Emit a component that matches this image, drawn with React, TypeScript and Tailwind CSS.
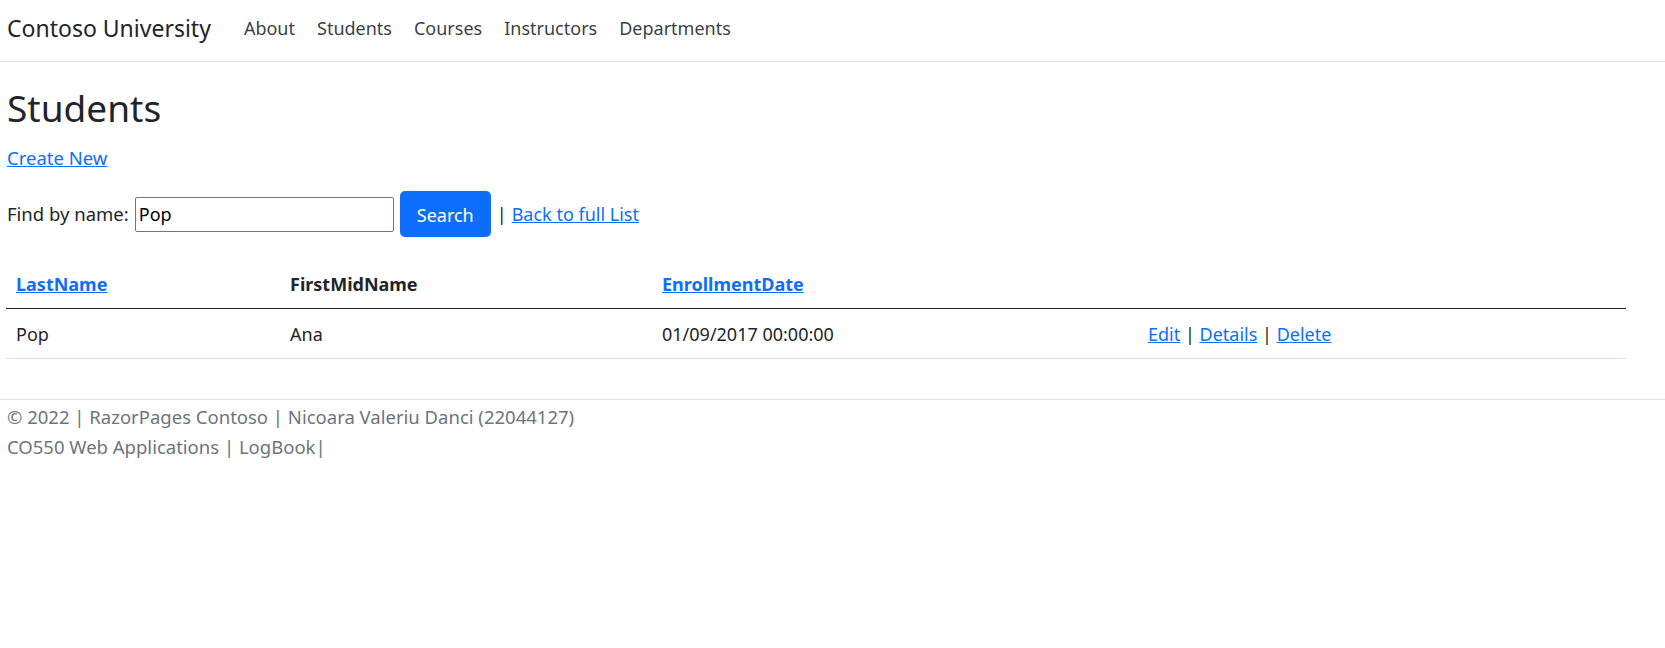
import React from "react";

const font = { fontFamily: '"Noto Sans", "Open Sans", "Liberation Sans", sans-serif' };

const navLinks = ["About", "Students", "Courses", "Instructors", "Departments"];

export default function App() {
  return (
    <div className="min-h-[648px] bg-white text-[18px] text-[#212529]" style={font}>
      {/* Navbar */}
      <header className="h-[62px] border-b border-[#dee2e6] flex items-center pl-[7px] pb-[4px]">
        <span className="text-[23px] leading-none">Contoso University</span>
        <nav className="flex items-center ml-[29px] gap-[14px]">
          {navLinks.map((l) => (
            <span key={l} className="px-[4px] text-[#212529]/90">{l}</span>
          ))}
        </nav>
      </header>

      <main className="px-[6px]">
        <h1 className="mt-[22px] text-[37px] leading-[48px] font-normal pl-px">Students</h1>

        <p className="mt-[14px] leading-[24px] pl-px text-[18.5px]">
          <a className="text-[#0d6efd] underline">Create New</a>
        </p>

        <form className="mt-[21px] flex items-center pl-px">
          <span className="text-[18.5px]">Find by name:</span>
          <input
            defaultValue="Pop"
            className="ml-[6px] w-[259px] h-[35px] border border-[#767676] rounded-[2px] px-[3px] text-[18px] text-black outline-none"
            style={font}
          />
          <button
            type="button"
            className="ml-[6px] w-[91px] h-[46px] bg-[#0d6efd] text-white text-[18px] rounded-[5px] pt-[2px]"
          >
            Search
          </button>
          <span className="ml-[6px]">|</span>
          <a className="ml-[5px] text-[#0d6efd] underline">Back to full List</a>
        </form>

        <table className="mt-[25px] w-[1620px] border-collapse text-left">
          <thead>
            <tr className="border-b border-[#212529]">
              <th className="w-[274px] h-[46px] px-[10px] font-bold">
                <a className="text-[#0d6efd] underline">LastName</a>
              </th>
              <th className="w-[372px] px-[10px] font-bold">FirstMidName</th>
              <th className="w-[486px] px-[10px] font-bold">
                <a className="text-[#0d6efd] underline">EnrollmentDate</a>
              </th>
              <th className="px-[10px]"></th>
            </tr>
          </thead>
          <tbody>
            <tr className="border-b border-[#dee2e6]">
              <td className="h-[50px] px-[10px] pt-[2px]">Pop</td>
              <td className="px-[10px] pt-[2px]">Ana</td>
              <td className="px-[10px] pt-[2px]">01/09/2017 00:00:00</td>
              <td className="px-[10px] pt-[2px]">
                <a className="text-[#0d6efd] underline">Edit</a> |{" "}
                <a className="text-[#0d6efd] underline">Details</a> |{" "}
                <a className="text-[#0d6efd] underline">Delete</a>
              </td>
            </tr>
          </tbody>
        </table>
      </main>

      <footer className="mt-[40px] border-t border-[#dee2e6] pl-[7px] pt-[2px] text-[#6c757d] text-[18.5px] leading-[30px]">
        <div>© 2022 | RazorPages Contoso | Nicoara Valeriu Danci (22044127)</div>
        <div>CO550 Web Applications | LogBook|</div>
      </footer>
    </div>
  );
}
